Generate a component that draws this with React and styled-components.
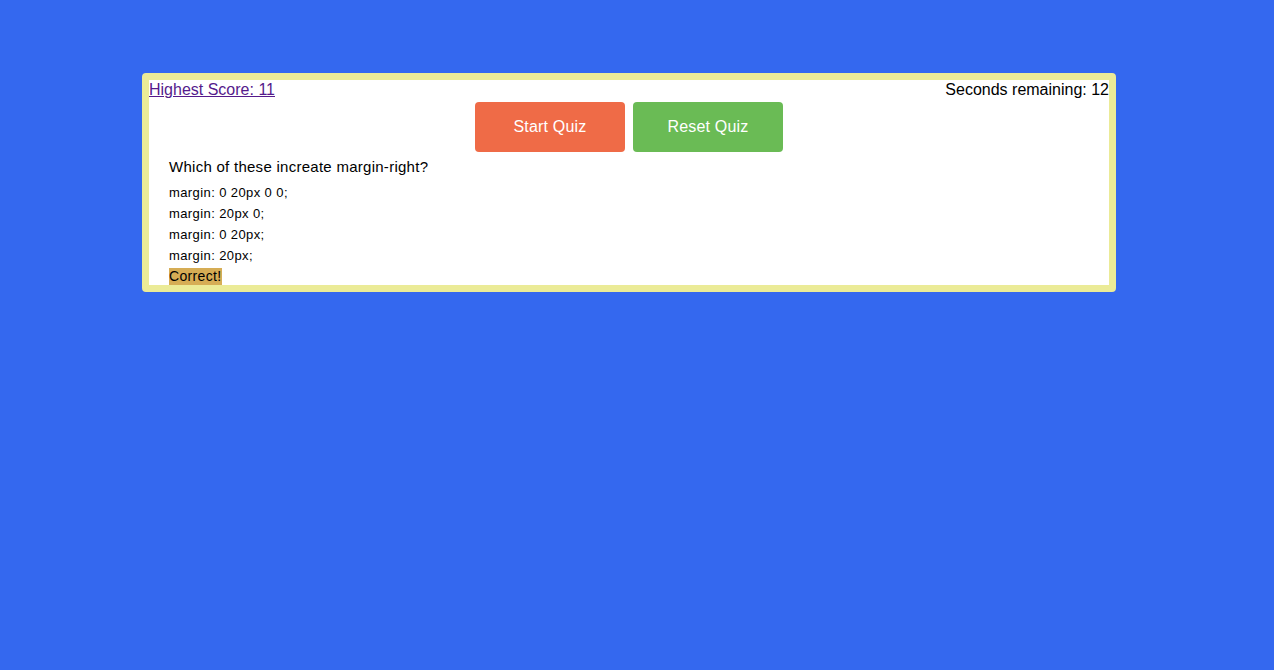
import React from 'react'
import styled, { createGlobalStyle } from 'styled-components'

const GlobalStyle = createGlobalStyle`
  html, body {
    margin: 0;
    background: #3468ef;
    font-family: "Liberation Sans", Arial, Helvetica, sans-serif;
  }
`

const Page = styled.div`
  min-height: 100vh;
  padding: 73px 0 0 142px;
  box-sizing: border-box;
`

const Card = styled.div`
  width: 974px;
  box-sizing: border-box;
  background: #fff;
  border: 7px solid #ebeb97;
  border-radius: 4px;
`

const Header = styled.div`
  display: flex;
  justify-content: space-between;
  font-size: 16px;
  line-height: 19px;
  color: #000;
`

const ScoreLink = styled.a`
  color: #551a8b;
  text-decoration: underline;
  cursor: pointer;
`

const ButtonRow = styled.div`
  display: flex;
  justify-content: center;
  gap: 8px;
  margin-top: 3px;
`

const Button = styled.button`
  width: 150px;
  height: 50px;
  border: none;
  border-radius: 4px;
  background: ${(p) => p.$bg};
  color: #fff;
  font-family: inherit;
  font-size: 16px;
  letter-spacing: 0.2px;
  cursor: pointer;
`

const QuizBody = styled.div`
  padding: 0 20px;
`

const Question = styled.p`
  margin: 6px 0 0;
  font-size: 15px;
  line-height: 18px;
  letter-spacing: 0.27px;
  color: #000;
`

const Options = styled.ul`
  list-style: none;
  margin: 6px 0 0;
  padding: 0;
`

const Option = styled.li`
  font-size: 13px;
  line-height: 21px;
  letter-spacing: 0.4px;
  color: #000;
  cursor: pointer;
`

const Result = styled.span`
  display: inline-block;
  margin-top: 2px;
  font-size: 14px;
  line-height: 17px;
  letter-spacing: 0.35px;
  background: #d6ad55;
  color: #000;
`

const options = ['margin: 0 20px 0 0;', 'margin: 20px 0;', 'margin: 0 20px;', 'margin: 20px;']

export default function App() {
  return (
    <Page>
      <GlobalStyle />
      <Card>
        <Header>
          <ScoreLink href="#">Highest Score: 11</ScoreLink>
          <span>Seconds remaining: 12</span>
        </Header>
        <ButtonRow>
          <Button $bg="#ef6b47">Start Quiz</Button>
          <Button $bg="#6abb55">Reset Quiz</Button>
        </ButtonRow>
        <QuizBody>
          <Question>Which of these increate margin-right?</Question>
          <Options>
            {options.map((o) => (
              <Option key={o}>{o}</Option>
            ))}
          </Options>
          <Result>Correct!</Result>
        </QuizBody>
      </Card>
    </Page>
  )
}
